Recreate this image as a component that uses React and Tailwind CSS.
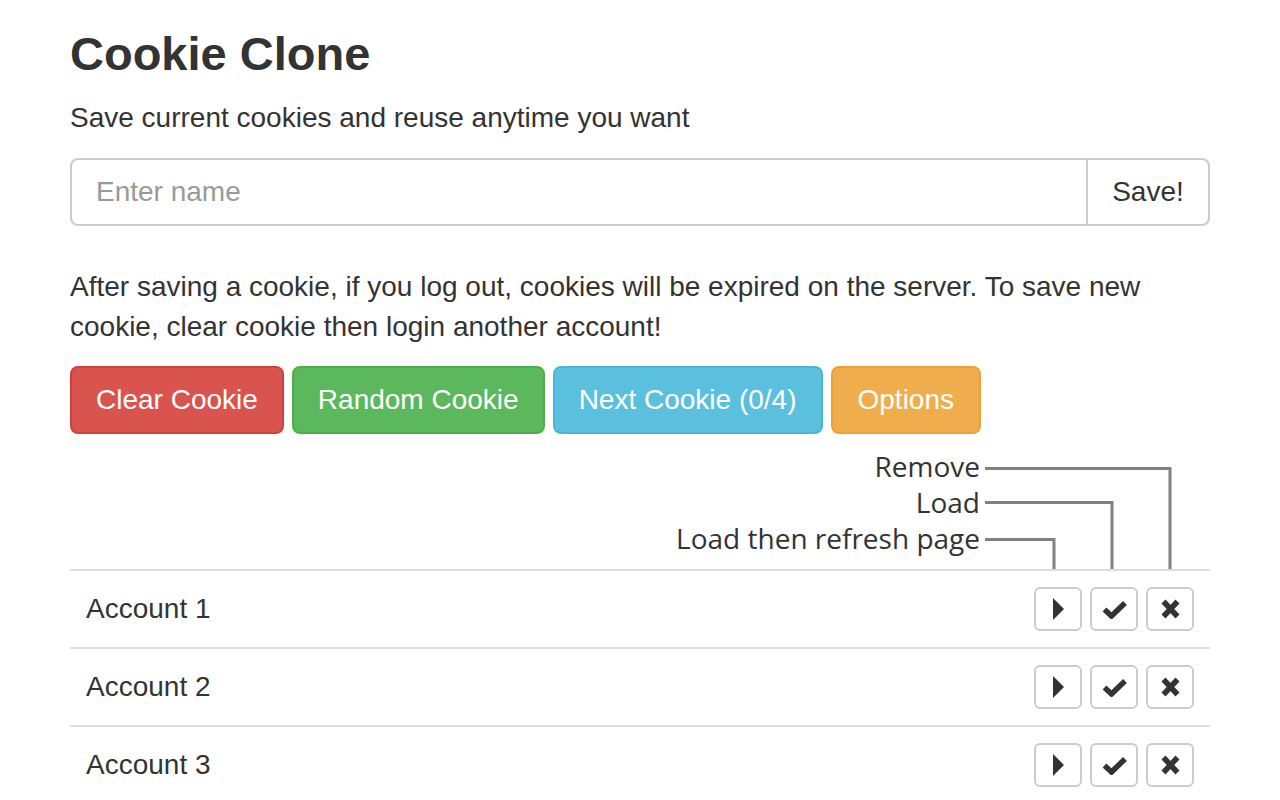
import React from 'react';

const accounts = ['Account 1', 'Account 2', 'Account 3'];

const PlayIcon = () => (
  <svg width="11" height="22" viewBox="0 0 11 22">
    <polygon points="0,0 11,11 0,22" fill="#333" />
  </svg>
);

const OkIcon = () => (
  <svg width="25" height="19" viewBox="0 0 25 19">
    <polyline points="2.5,9.5 9.5,16 23,3" fill="none" stroke="#333" strokeWidth="5.5" strokeLinejoin="miter" />
  </svg>
);

const RemoveIcon = () => (
  <svg width="19" height="20" viewBox="0 0 19 20">
    <path d="M2.5 2.5 L16.5 17.5 M16.5 2.5 L2.5 17.5" stroke="#333" strokeWidth="5.5" />
  </svg>
);

const IconButton = ({ children }) => (
  <button className="w-[48px] h-[44px] flex items-center justify-center bg-white border-2 border-[#ccc] rounded-[6px]">
    {children}
  </button>
);

const App = () => {
  return (
    <div className="min-h-screen bg-white text-[#333] font-['Liberation_Sans',Arial,sans-serif]">
      <div className="px-[70px] pt-[27px]">
        <h1 className="text-[47px] leading-[53px] font-bold">Cookie Clone</h1>
        <p className="mt-[18px] text-[28px] leading-[40px]">Save current cookies and reuse anytime you want</p>

        <div className="mt-[20px] flex h-[68px]">
          <input
            type="text"
            placeholder="Enter name"
            className="flex-1 h-full border-2 border-[#ccc] rounded-l-[8px] px-[24px] text-[28px] placeholder:text-[#999] outline-none"
          />
          <button className="-ml-[2px] h-full w-[124px] border-2 border-[#ccc] rounded-r-[8px] bg-white text-[28px] leading-[40px]">
            Save!
          </button>
        </div>

        <p className="mt-[41px] text-[28px] leading-[40px]">
          After saving a cookie, if you log out, cookies will be expired on the server. To save new cookie, clear cookie then login another account!
        </p>

        <div className="mt-[19px] flex gap-[8px] text-[28px] leading-[40px] text-white">
          <button className="px-[24px] py-[12px] border-2 rounded-[8px] bg-[#d9534f] border-[#d43f3a]">Clear Cookie</button>
          <button className="px-[24px] py-[12px] border-2 rounded-[8px] bg-[#5cb85c] border-[#4cae4c]">Random Cookie</button>
          <button className="px-[24px] py-[12px] border-2 rounded-[8px] bg-[#5bc0de] border-[#46b8da]">Next Cookie (0/4)</button>
          <button className="px-[25px] py-[12px] border-2 rounded-[8px] bg-[#f0ad4e] border-[#eea236]">Options</button>
        </div>

        <div className="flex justify-end h-[135px]">
          <div className="pt-[14px] text-right text-[28px] leading-[36px] font-['Open_Sans',sans-serif] text-[#333]">
            <div>Remove</div>
            <div>Load</div>
            <div>Load then refresh page</div>
          </div>
          <svg width="230" height="135" viewBox="0 0 230 135" className="shrink-0">
            <path d="M5 34.5 H190 V135" fill="none" stroke="#808080" strokeWidth="3" />
            <path d="M5 68.5 H132 V135" fill="none" stroke="#808080" strokeWidth="3" />
            <path d="M5 105.5 H74 V135" fill="none" stroke="#808080" strokeWidth="3" />
          </svg>
        </div>

        <div>
          {accounts.map((name) => (
            <div key={name} className="flex items-center justify-between border-t-2 border-[#ddd] px-[16px] py-[16px]">
              <span className="text-[28px] leading-[40px]">{name}</span>
              <div className="flex gap-[8px]">
                <IconButton><PlayIcon /></IconButton>
                <IconButton><OkIcon /></IconButton>
                <IconButton><RemoveIcon /></IconButton>
              </div>
            </div>
          ))}
        </div>
      </div>
    </div>
  );
};

export default App;
